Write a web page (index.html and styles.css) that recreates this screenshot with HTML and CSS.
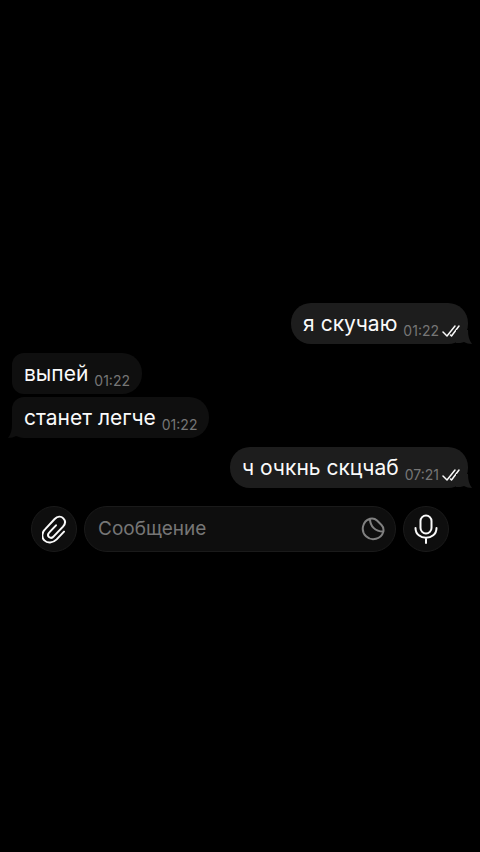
FILE: index.html
```html
<!DOCTYPE html>
<html lang="ru">
<head>
<meta charset="utf-8">
<meta name="viewport" content="width=device-width, initial-scale=1">
<title>Чат</title>
<link rel="stylesheet" href="styles.css">
</head>
<body>
<svg class="defs" aria-hidden="true">
  <symbol id="tail" viewBox="0 0 16 14"><path d="M0 13V0h12c0 6 1 10 4 14-3 0-6-1-8-2-2 1-5 1-8 1z"/></symbol>
  <symbol id="read" viewBox="0 0 18 12"><path d="M1 7l4 4L13 1M8.500 10l1 1L17 1" fill="none" stroke="currentColor" stroke-width="1.500" stroke-linecap="round" stroke-linejoin="round"/></symbol>
</svg>
<main class="chat">
  <section class="messages">
    <article class="bubble out">
      <p class="text">я скучаю</p>
      <span class="meta"><time>01:22</time><svg class="read"><use href="#read"/></svg></span>
      <svg class="tail"><use href="#tail"/></svg>
    </article>
    <article class="bubble in turn">
      <p class="text">выпей</p>
      <span class="meta"><time>01:22</time></span>
    </article>
    <article class="bubble in last">
      <p class="text">станет легче</p>
      <span class="meta"><time>01:22</time></span>
      <svg class="tail"><use href="#tail"/></svg>
    </article>
    <article class="bubble out turn">
      <p class="text">ч очкнь скцчаб</p>
      <span class="meta"><time>07:21</time><svg class="read"><use href="#read"/></svg></span>
      <svg class="tail"><use href="#tail"/></svg>
    </article>
  </section>
  <form class="composer">
    <button class="round" type="button" aria-label="Прикрепить">
      <svg class="clip" viewBox="64 49 75 87"><path d="M130 99l-22 23c-12 12-28 12-37 3-9-9-8-23 2-33l29-31c8-8 19-9 26-2 7 7 6 17-1 25l-28 29c-4 5-10 5-14 2-4-4-3-10 1-14l20-21"/></svg>
    </button>
    <div class="field">
      <input class="input" type="text" aria-label="Сообщение" placeholder="Сообщение">
      <button class="sticker" type="button" aria-label="Стикеры">
        <svg viewBox="0 0 24 24"><path d="M9 1.700A10.500 10.500 0 1 0 22.400 14.500C22.900 11.500 22 9.500 20.500 8L16 3.500C14 1.500 11.500 1.100 9 1.700zC9 9 14 14.500 22.400 14.500"/></svg>
      </button>
    </div>
    <button class="round" type="button" aria-label="Голосовое сообщение">
      <svg class="mic" viewBox="0 0 24 30"><rect x="6.500" y="1.500" width="11" height="18" rx="5.500"/><path d="M1.500 14c0 13 21 13 21 0M12 24v5"/></svg>
    </button>
  </form>
</main>
</body>
</html>
```
FILE: styles.css
```css
* {
  box-sizing: border-box;
}

body {
  margin: 0;
  background: #000;
  color: #fafafa;
  font-family: Inter, "Liberation Sans", sans-serif;
}

button {
  padding: 0;
  border: 0;
  background: none;
  color: inherit;
}

.defs {
  position: absolute;
  width: 0;
  height: 0;
}

.chat {
  display: flex;
  flex-direction: column;
  justify-content: center;
  min-height: 100vh;
  padding-top: 3px;
}

.messages {
  display: flex;
  flex-direction: column;
  gap: 3px;
  padding: 0 12px;
}

.bubble {
  position: relative;
  display: flex;
  align-items: flex-end;
  gap: 6px;
  height: 41px;
  padding: 0 12px;
  border-radius: 20px;
}

.turn {
  margin-top: 6px;
}

.out {
  align-self: flex-end;
  padding-right: 8px;
  background: #1d1d1d;
}

.in {
  align-self: flex-start;
  background: #0f0f0f;
  border-radius: 12px 20px 20px 12px;
}

.text {
  margin: 0;
  font-size: 21px;
  line-height: 41px;
}

.meta {
  display: flex;
  align-items: center;
  gap: 3px;
  padding-bottom: 4px;
  font-size: 14px;
  line-height: 18px;
}

time {
  color: #767676;
}

.read {
  width: 18px;
  height: 12px;
}

.tail {
  position: absolute;
  right: -4px;
  bottom: 0;
  width: 16px;
  height: 14px;
  fill: #1d1d1d;
}

.in .tail {
  right: auto;
  left: -4px;
  fill: #0f0f0f;
  transform: scaleX(-1);
}

.composer {
  display: flex;
  gap: 7px;
  margin-top: 18px;
  padding: 0 31px;
}

.round {
  display: flex;
  flex: none;
  align-items: center;
  justify-content: center;
  width: 46px;
  height: 46px;
  border: 1px solid #1a1a1a;
  border-radius: 50%;
  background: #0e0e0e;
}

.composer svg {
  fill: none;
  stroke: currentColor;
  stroke-width: 2;
  stroke-linecap: round;
  stroke-linejoin: round;
}

.composer .clip {
  width: 25px;
  height: 29px;
  stroke-width: 6;
}

.mic {
  width: 24px;
  height: 30px;
}

.field {
  display: flex;
  flex: 1;
  align-items: center;
  min-width: 0;
  height: 46px;
  padding: 0 10px 0 13px;
  border: 1px solid #1a1a1a;
  border-radius: 23px;
  background: #0e0e0e;
}

.input {
  flex: 1;
  min-width: 0;
  padding: 0;
  border: 0;
  outline: 0;
  background: none;
  color: #fafafa;
  font: 19px/24px Inter, "Liberation Sans", sans-serif;
}

.input::placeholder {
  color: #767676;
  opacity: 1;
}

.sticker {
  display: flex;
  color: #808080;
}

.sticker svg {
  width: 24px;
  height: 24px;
}
```
